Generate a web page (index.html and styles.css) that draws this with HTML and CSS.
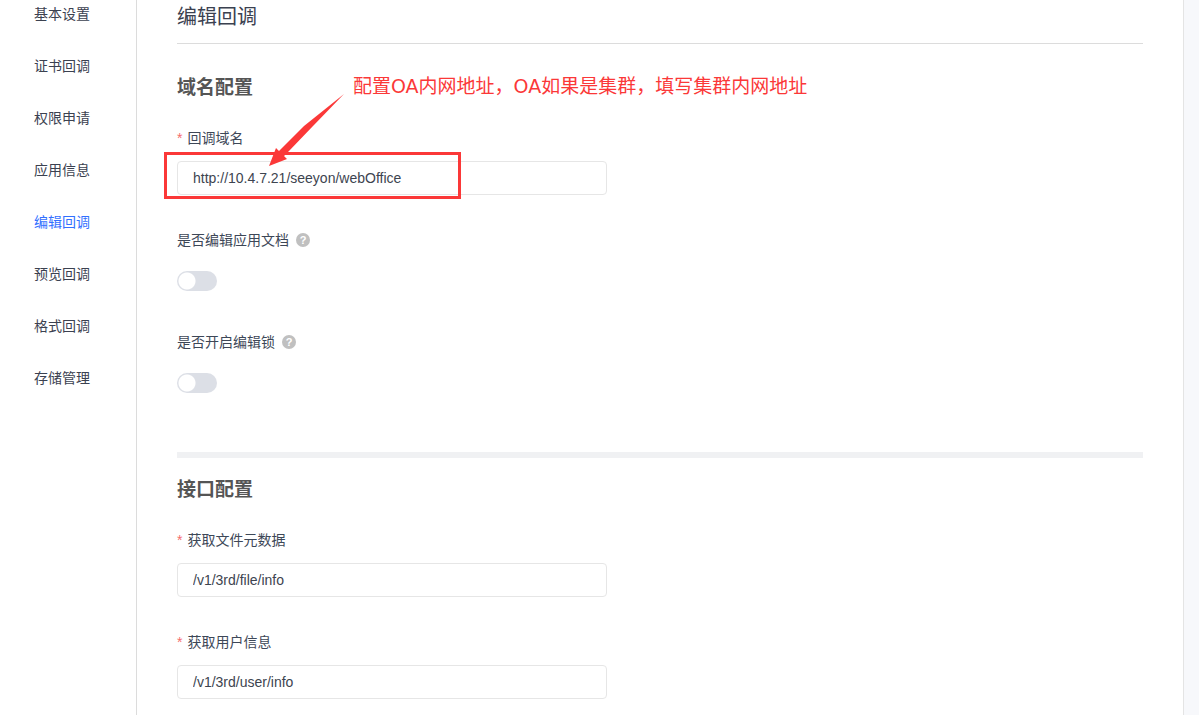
FILE: index.html
```html
<!DOCTYPE html>
<html lang="zh-CN">

<head>
    <meta charset="UTF-8">
    <title>编辑回调</title>
    <link rel="stylesheet" href="styles.css">
</head>

<body>
    <div class="page">
        <nav class="menu">
            <a href="#">基本设置</a>
            <a href="#">证书回调</a>
            <a href="#">权限申请</a>
            <a href="#">应用信息</a>
            <a href="#" class="active">编辑回调</a>
            <a href="#">预览回调</a>
            <a href="#">格式回调</a>
            <a href="#">存储管理</a>
        </nav>
        <main class="content">
            <h1 class="title">编辑回调</h1>
            <form>
                <section class="section">
                    <h2>域名配置</h2>
                    <div class="form-item">
                        <label class="required" for="domain">回调域名</label>
                        <div class="control">
                            <input class="text" type="text" id="domain" value="http://10.4.7.21/seeyon/webOffice">
                            <!-- 标注 -->
                            <div class="mark-box"></div>
                            <svg class="mark-arrow" width="80" height="76" viewBox="0 0 80 76">
                                <polygon points="2,74 9,56 12,59 37,34 77,2 46,34 22,59 17,64 20,67" />
                            </svg>
                            <p class="mark-text">配置OA内网地址，OA如果是集群，填写集群内网地址</p>
                        </div>
                    </div>
                    <div class="form-item">
                        <div class="label-row">
                            <label for="edit-doc">是否编辑应用文档</label>
                            <button type="button" class="help">?</button>
                        </div>
                        <div class="control">
                            <input class="switch" type="checkbox" id="edit-doc">
                        </div>
                    </div>
                    <div class="form-item">
                        <div class="label-row">
                            <label for="edit-lock">是否开启编辑锁</label>
                            <button type="button" class="help">?</button>
                        </div>
                        <div class="control">
                            <input class="switch" type="checkbox" id="edit-lock">
                        </div>
                    </div>
                </section>
                <section class="section api">
                    <h2>接口配置</h2>
                    <div class="form-item">
                        <label class="required" for="file-info">获取文件元数据</label>
                        <div class="control">
                            <input class="text" type="text" id="file-info" value="/v1/3rd/file/info">
                        </div>
                    </div>
                    <div class="form-item">
                        <label class="required" for="user-info">获取用户信息</label>
                        <div class="control">
                            <input class="text" type="text" id="user-info" value="/v1/3rd/user/info">
                        </div>
                    </div>
                </section>
            </form>
        </main>
    </div>
</body>

</html>
```
FILE: styles.css
```css
* {
    margin: 0;
    padding: 0;
    box-sizing: border-box;
}

body {
    background-color: #f7f8fb;
    color: #3d4757;
    font: 14px/22px "Liberation Sans", "Noto Sans CJK SC", sans-serif;
}

.page {
    display: flex;
    min-height: 100vh;
    margin-right: 15px;
    border-right: 1px solid #e4e4e4;
    background-color: #fff;
}

.menu {
    display: flex;
    flex-direction: column;
    flex: none;
    gap: 24px;
    width: 137px;
    padding-left: 34px;
    border-right: 1px solid #dcdcdc;
}

.menu a {
    color: #3b4150;
    line-height: 28px;
    text-decoration: none;
}

.menu a.active {
    color: #3370ff;
}

.content {
    flex: 1;
    padding: 0 40px;
}

.title {
    padding-top: 1px;
    padding-bottom: 10px;
    border-bottom: 1px solid #dcdcdc;
    color: #3b4150;
    font-size: 20px;
    font-weight: normal;
    line-height: 32px;
}

.section {
    padding-top: 32px;
}

.section h2 {
    margin-bottom: 27px;
    color: #555;
    font-size: 19px;
    line-height: 24px;
}

.api {
    margin-top: 53px;
    padding-top: 20px;
    border-top: 6px solid #f0f1f3;
}

.form-item + .form-item {
    margin-top: 34px;
}

.form-item label {
    display: block;
}

.required:before {
    content: "*";
    margin-right: 5px;
    color: #f56c6c;
}

.label-row {
    display: flex;
    align-items: center;
    gap: 7px;
}

.help {
    width: 14px;
    height: 14px;
    border: none;
    border-radius: 50%;
    background-color: #c0c0c0;
    color: #fff;
    font: bold 11px/14px "Liberation Sans", sans-serif;
    text-align: center;
}

.control {
    display: flex;
    align-items: center;
    position: relative;
    height: 34px;
    margin-top: 12px;
}

.text {
    width: 430px;
    max-width: 100%;
    height: 34px;
    padding: 0 15px;
    border: 1px solid #e6e6e6;
    border-radius: 4px;
    background-color: #fff;
    color: #3d4450;
    font: 14px "Liberation Sans", sans-serif;
}

.switch {
    appearance: none;
    width: 40px;
    height: 20px;
    margin-top: 2px;
    border-radius: 10px;
    background: #dcdfe6 radial-gradient(circle at 10px 10px, #fff 8px, transparent 9px);
}

.switch:checked {
    background: #3370ff radial-gradient(circle at 30px 10px, #fff 8px, transparent 9px);
}

/* 标注 */
.mark-box {
    position: absolute;
    top: -9px;
    left: -13px;
    width: 297px;
    height: 47px;
    border: 3px solid #fb3838;
}

.mark-arrow {
    position: absolute;
    top: -69px;
    left: 90px;
    fill: #fb3838;
}

.mark-text {
    position: absolute;
    top: -87px;
    left: 176px;
    color: #fb3838;
    font: 19px/24px "DejaVu Sans", "Noto Sans CJK SC", sans-serif;
    white-space: nowrap;
}
```
